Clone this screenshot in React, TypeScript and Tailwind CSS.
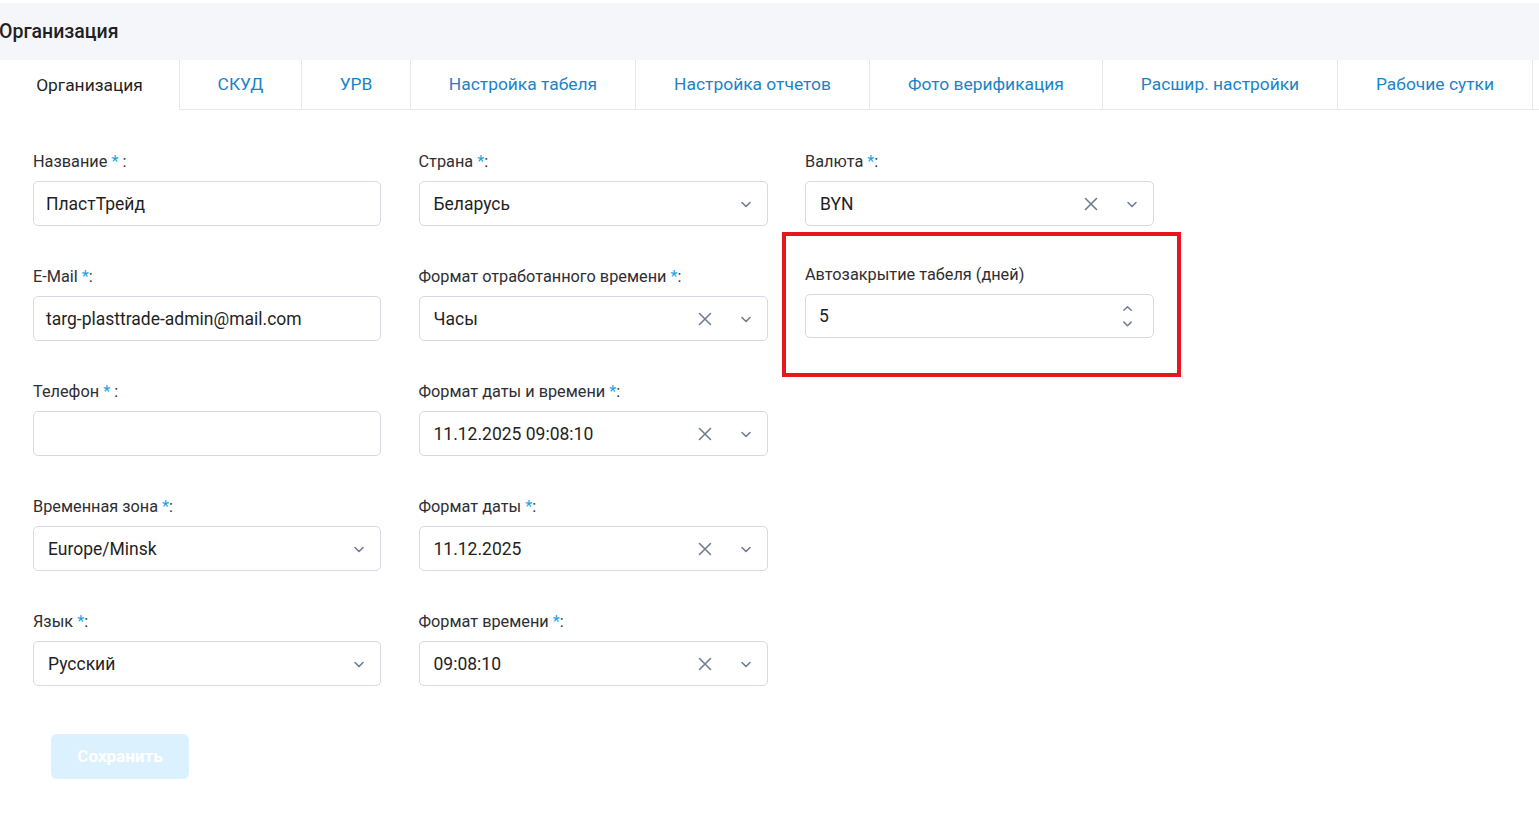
import React from "react";

const Chevron = ({ up = false, size = 12 }: { up?: boolean; size?: number }) => (
  <svg width={size} height={size} viewBox="0 0 12 12" fill="none" className="text-[#6f7c91]">
    <path
      d={up ? "M2 8 L6 4 L10 8" : "M2 4.5 L6 8.5 L10 4.5"}
      stroke="currentColor"
      strokeWidth="1.6"
      strokeLinecap="round"
      strokeLinejoin="round"
    />
  </svg>
);

const Cross = () => (
  <svg width="14" height="14" viewBox="0 0 14 14" fill="none" className="text-[#6f7c91]">
    <path d="M1.5 1.5 L12.5 12.5 M12.5 1.5 L1.5 12.5" stroke="currentColor" strokeWidth="1.6" strokeLinecap="round" />
  </svg>
);

const Label = ({ text, star, spaced }: { text: string; star?: boolean; spaced?: boolean }) => (
  <div className="h-[20px] mt-[1px] text-[16.3px] leading-[20px] text-[#2e2e33] whitespace-nowrap">
    {text}
    {star && (
      <>
        {" "}
        <span className="text-[#1aa3e8]">*</span>
        {spaced ? " :" : ":"}
      </>
    )}
  </div>
);

const TextInput = ({ value }: { value: string }) => (
  <div className="h-[45px] w-full rounded-[5px] border border-[#d6d8e3] bg-white px-[12px] pt-[1px] flex items-center text-[17.5px] text-[#1f1f24]">
    {value}
  </div>
);

const Select = ({ value, clearable }: { value: string; clearable?: boolean }) => (
  <div className="h-[45px] w-full rounded-[5px] border border-[#d6d8e3] bg-white pl-[14px] pr-[15px] pt-[1px] flex items-center text-[17.5px] text-[#1f1f24]">
    <span className="flex-1">{value}</span>
    {clearable && (
      <span className="mr-[28px] flex items-center">
        <Cross />
      </span>
    )}
    <Chevron />
  </div>
);

const Field = ({ children }: { children: React.ReactNode }) => (
  <div className="flex flex-col gap-[9px]">{children}</div>
);

const tabs = [
  { t: "Организация", w: 180 },
  { t: "СКУД", w: 122 },
  { t: "УРВ", w: 109 },
  { t: "Настройка табеля", w: 225 },
  { t: "Настройка отчетов", w: 234 },
  { t: "Фото верификация", w: 233 },
  { t: "Расшир. настройки", w: 235 },
  { t: "Рабочие сутки", w: 195 },
];

export default function App() {
  return (
    <div
      className="min-h-[837px] w-[1539px] bg-white pt-[3px] overflow-hidden"
      style={{ fontFamily: "Roboto, 'Noto Sans', sans-serif" }}
    >
      <div className="h-[57px] bg-[#f5f6fa] flex items-center">
        <h1 className="-ml-[1px] text-[19.5px] font-medium text-[#1f1f24]">Организация</h1>
      </div>

      <div className="flex h-[50px]">
        {tabs.map((tab, i) => (
          <div
            key={tab.t}
            style={{ width: tab.w }}
            className={
              i === 0
                ? "shrink-0 flex items-center justify-center border-r border-[#e6e7eb] text-[17.4px] text-[#1f1f24]"
                : "shrink-0 flex items-center justify-center border-r border-b border-[#e6e7eb] text-[17.4px] text-[#1a84c6]"
            }
          >
            {tab.t}
          </div>
        ))}
        <div className="flex-1 border-b border-[#e6e7eb]" />
      </div>

      <div className="pl-[33px] pt-[41px]">
        <div className="grid grid-cols-[348px_349px_349px] gap-x-[37.5px] gap-y-[40px]">
          <Field>
            <Label text="Название" star spaced />
            <TextInput value="ПластТрейд" />
          </Field>
          <Field>
            <Label text="Страна" star />
            <Select value="Беларусь" />
          </Field>
          <Field>
            <Label text="Валюта" star />
            <Select value="BYN" clearable />
          </Field>

          <Field>
            <Label text="E-Mail" star />
            <TextInput value="targ-plasttrade-admin@mail.com" />
          </Field>
          <Field>
            <Label text="Формат отработанного времени" star />
            <Select value="Часы" clearable />
          </Field>
          <div className="relative">
            <div className="-mt-[2px] flex flex-col gap-[9px]">
              <Label text="Автозакрытие табеля (дней)" />
              <div className="h-[44px] w-full rounded-[5px] border border-[#d6d8e3] bg-white pl-[13px] pr-[20px] flex items-center text-[17.5px] text-[#1f1f24]">
                <span className="flex-1">5</span>
                <div className="flex flex-col items-center gap-[4px]">
                  <Chevron up size={11} />
                  <Chevron size={11} />
                </div>
              </div>
            </div>
            <div className="pointer-events-none absolute left-[-23px] top-[-34px] w-[399px] h-[145px] border-[4px] border-[#e8141f]" />
          </div>

          <Field>
            <Label text="Телефон" star spaced />
            <TextInput value="" />
          </Field>
          <Field>
            <Label text="Формат даты и времени" star />
            <Select value="11.12.2025 09:08:10" clearable />
          </Field>
          <div />

          <Field>
            <Label text="Временная зона" star />
            <Select value="Europe/Minsk" />
          </Field>
          <Field>
            <Label text="Формат даты" star />
            <Select value="11.12.2025" clearable />
          </Field>
          <div />

          <Field>
            <Label text="Язык" star />
            <Select value="Русский" />
          </Field>
          <Field>
            <Label text="Формат времени" star />
            <Select value="09:08:10" clearable />
          </Field>
          <div />
        </div>

        <button className="mt-[48px] ml-[18px] h-[45px] w-[138px] rounded-[6px] bg-[#dbf2fe] text-[17px] font-bold text-white">
          Сохранить
        </button>
      </div>
    </div>
  );
}
